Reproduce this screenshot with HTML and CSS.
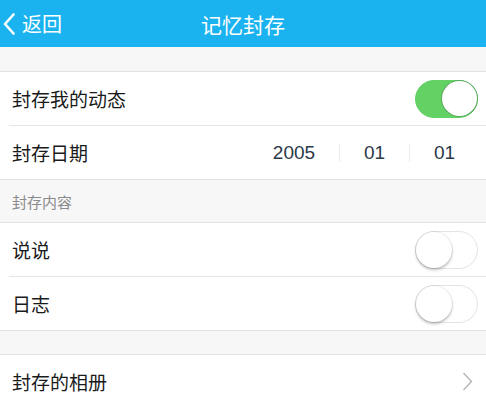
FILE: index.html
```html
<!DOCTYPE html>
<html lang="zh-CN">

<head>
  <meta charset="UTF-8">
  <meta name="viewport" content="width=device-width, initial-scale=1.0">
  <title>记忆封存</title>
  <link rel="stylesheet" href="styles.css">
</head>

<body>
  <div class="nav-bar">
    <div class="nav-back">
      <svg class="back-icon" width="12" height="22" viewBox="0 0 12 22">
        <polyline points="10.5,1.5 2,11 10.5,20.5" fill="none" stroke="#fff" stroke-width="2.6" stroke-linecap="round" stroke-linejoin="round"/>
      </svg>
      <span>返回</span>
    </div>
    <div class="nav-title">记忆封存</div>
    <div></div>
  </div>

  <div class="gap top"></div>

  <div class="group">
    <div class="row">
      <div class="label">封存我的动态</div>
      <div class="switch on"><span class="knob"></span></div>
    </div>
    <div class="row last">
      <div class="label">封存日期</div>
      <div class="date">
        <span class="date-part year">2005</span>
        <span class="date-sep"></span>
        <span class="date-part">01</span>
        <span class="date-sep"></span>
        <span class="date-part">01</span>
      </div>
    </div>
  </div>

  <div class="section-title">封存内容</div>

  <div class="group">
    <div class="row">
      <div class="label">说说</div>
      <div class="switch"><span class="knob"></span></div>
    </div>
    <div class="row last">
      <div class="label">日志</div>
      <div class="switch"><span class="knob"></span></div>
    </div>
  </div>

  <div class="gap"></div>

  <div class="group">
    <div class="row last">
      <div class="label">封存的相册</div>
      <svg class="arrow" width="11" height="19" viewBox="0 0 11 19">
        <polyline points="1.5,1 9.5,9.5 1.5,18" fill="none" stroke="#b4b4b4" stroke-width="1.4"/>
      </svg>
    </div>
  </div>
</body>

</html>
```

FILE: styles.css
```css
body {
  margin: 0;
  font-family: "Noto Sans CJK SC", "Liberation Sans", sans-serif;
  background-color: #f7f7f8;
  color: #1a1a1a;
}

.nav-bar {
  display: grid;
  grid-template-columns: 1fr auto 1fr;
  align-items: center;
  height: 47px;
  background-color: #1bb3ef;
  color: #fff;
}

.nav-back {
  display: flex;
  align-items: center;
  padding-left: 3px;
  font-size: 20px;
  line-height: 22px;
}

.back-icon {
  margin-right: 7px;
}

.nav-title {
  font-size: 21px;
  line-height: 24px;
}

.gap {
  height: 23px;
  border-bottom: 1px solid #e2e2e4;
}

.gap.top {
  height: 24px;
}

.group {
  background-color: #fff;
  border-bottom: 1px solid #e2e2e4;
}

.row {
  display: flex;
  align-items: center;
  justify-content: space-between;
  box-sizing: border-box;
  height: 54px;
  margin-left: 9px;
  padding: 0 8px 0 3px;
  border-bottom: 1px solid #e6e6e8;
}

.row.last {
  height: 53px;
  border-bottom: none;
}

.label {
  font-size: 19px;
  line-height: 22px;
}

.section-title {
  box-sizing: border-box;
  height: 43px;
  padding-left: 12px;
  display: flex;
  align-items: center;
  font-size: 15px;
  color: #8a8a8c;
  border-bottom: 1px solid #e2e2e4;
}

.switch {
  display: flex;
  align-items: center;
  box-sizing: border-box;
  width: 63px;
  height: 38px;
  border-radius: 19px;
  border: 1.5px solid #e4e4e4;
  background-color: #fff;
}

.switch .knob {
  width: 36px;
  height: 36px;
  border-radius: 50%;
  background-color: #fff;
  box-shadow: 0 2px 3px rgba(0, 0, 0, 0.24), 0 0 0 1px rgba(0, 0, 0, 0.06);
}

.switch.on {
  justify-content: flex-end;
  background-color: #63d164;
  border-color: #63d164;
}

.switch.on .knob {
  width: 35px;
  height: 35px;
  box-shadow: 0 0 0 1px #5aaa5c;
}

.date {
  display: flex;
  align-items: center;
  margin-right: -1px;
  font-family: "Liberation Sans", Arial, sans-serif;
  font-size: 19px;
  color: #2b3848;
}

.date-part {
  width: 69px;
  text-align: center;
}

.date-part.year {
  width: 90px;
}

.date-sep {
  width: 1px;
  height: 18px;
  background-color: #ececec;
}

.arrow {
  margin-right: 5px;
}
```
